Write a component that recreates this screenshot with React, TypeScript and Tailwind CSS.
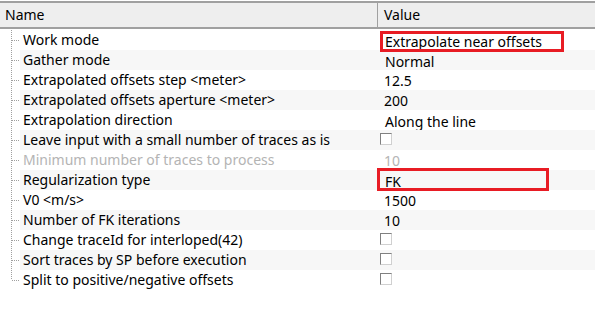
import React from "react";

type Row = {
  name: string;
  value?: string;
  checkbox?: boolean;
  disabled?: boolean;
  combo?: boolean;
  box?: "work" | "reg";
};

const ROWS: Row[] = [
  { name: "Work mode", value: "Extrapolate near offsets", combo: true, box: "work" },
  { name: "Gather mode", value: "Normal", combo: true },
  { name: "Extrapolated offsets step <meter>", value: "12.5" },
  { name: "Extrapolated offsets aperture <meter>", value: "200" },
  { name: "Extrapolation direction", value: "Along the line", combo: true },
  { name: "Leave input with a small number of traces as is", checkbox: true },
  { name: "Minimum number of traces to process", value: "10", disabled: true },
  { name: "Regularization type", value: "FK", combo: true, box: "reg" },
  { name: "V0 <m/s>", value: "1500" },
  { name: "Number of FK iterations", value: "10" },
  { name: "Change traceId for interloped(42)", checkbox: true },
  { name: "Sort traces by SP before execution", checkbox: true },
  { name: "Split to positive/negative offsets", checkbox: true },
];

function TreeLine({ last }: { last: boolean }) {
  return (
    <svg width="20" height="20" className="shrink-0">
      <line x1="11.5" y1="0" x2="11.5" y2={last ? 10 : 20} stroke="#a0a0a0" strokeDasharray="1 1" />
      <line x1="12" y1="10.5" x2="19" y2="10.5" stroke="#a0a0a0" strokeDasharray="1 1" />
    </svg>
  );
}

function Checkbox() {
  return (
    <span className="block ml-[-4px] w-[12px] h-[12px] mt-[3px] border border-t-[#808080] border-l-[#808080] border-b-[#d0d0d0] border-r-[#d0d0d0] bg-white" />
  );
}

export default function App() {
  return (
    <div
      className="w-[595px] h-[311px] bg-white text-[14px] text-black overflow-hidden"
      style={{ fontFamily: '"Noto Sans", "Open Sans", sans-serif' }}
    >
      <div className="mt-[1px] h-[28px] flex bg-[#eeeeee] border-t-2 border-b-2 border-[#a0a0a0] leading-[24px]">
        <div className="w-[378px] pl-[5px] border-r border-[#a0a0a0]">Name</div>
        <div className="pl-[6px]">Value</div>
      </div>
      <div className="mt-[1px]">
        {ROWS.map((r, i) => (
          <div key={r.name} className="flex h-[20px] leading-[20px]">
            <TreeLine last={i === ROWS.length - 1} />
            <div className={`flex flex-1 ${i % 2 === 1 ? "bg-[#f7f7f7]" : "bg-white"}`}>
              <div
                className={`w-[359px] pl-[3px] whitespace-nowrap overflow-hidden ${
                  r.disabled ? "text-[#b4b4b4]" : ""
                }`}
              >
                {r.name}
              </div>
              <div className={`relative flex-1 pl-[5px] ${r.disabled ? "text-[#b4b4b4]" : ""}`}>
                {r.checkbox ? (
                  <Checkbox />
                ) : (
                  <div className="h-[20px] overflow-hidden whitespace-nowrap">
                    <span className={`block ${r.combo ? "pt-[2px] pl-[1px]" : "pt-[1px]"}`}>{r.value}</span>
                  </div>
                )}
                {r.box === "work" && (
                  <div className="absolute left-[1px] top-[1px] w-[184px] h-[21px] border-[3px] border-[#e81c24]" />
                )}
                {r.box === "reg" && (
                  <div className="absolute left-[-2px] top-[-2px] w-[172px] h-[23px] border-[3px] border-[#e81c24]" />
                )}
              </div>
            </div>
          </div>
        ))}
      </div>
    </div>
  );
}
